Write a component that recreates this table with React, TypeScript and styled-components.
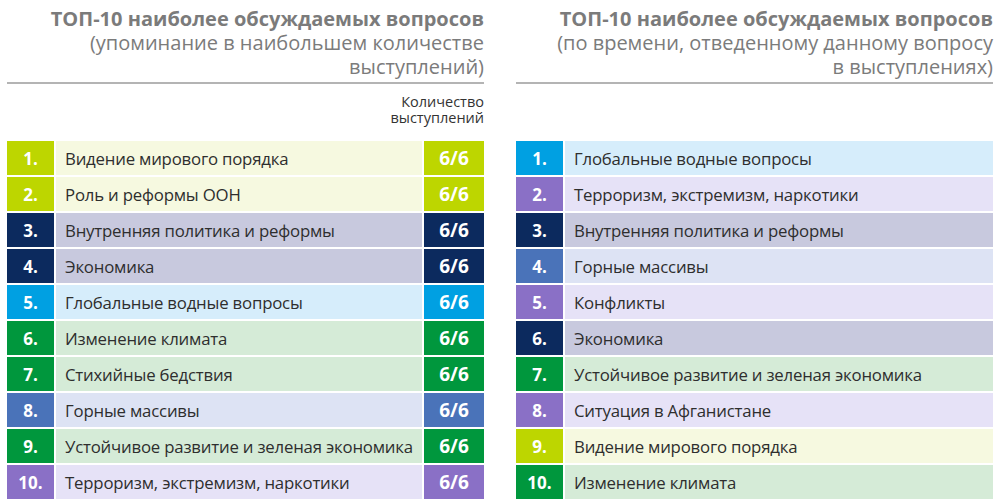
import React from 'react';
import styled, { createGlobalStyle } from 'styled-components';

const GlobalStyle = createGlobalStyle`
  html, body {
    margin: 0;
    padding: 0;
    background: #ffffff;
  }
  body {
    font-family: "Open Sans", "Noto Sans", "DejaVu Sans", sans-serif;
    color: #333333;
  }
`;

type Tone = 'lime' | 'navy' | 'sky' | 'green' | 'steel' | 'violet';

const palette: Record<Tone, { main: string; light: string }> = {
  lime: { main: '#bdd600', light: '#f6f9e0' },
  navy: { main: '#0c2a5e', light: '#c8c9de' },
  sky: { main: '#00a0e2', light: '#d6edfb' },
  green: { main: '#00973d', light: '#d5ebd7' },
  steel: { main: '#4a73b9', light: '#dde3f4' },
  violet: { main: '#8a70c6', light: '#e6e2f7' },
};

const Page = styled.div`
  width: 1000px;
  height: 503px;
  display: grid;
  grid-template-columns: 477px 477px;
  column-gap: 32px;
  padding: 0 7px 0 7px;
  box-sizing: border-box;
  overflow: hidden;
`;

const Panel = styled.section`
  display: flex;
  flex-direction: column;
  min-width: 0;
`;

const Heading = styled.header`
  padding-top: 7px;
  padding-bottom: 3px;
  border-bottom: 2px solid #b4b4b4;
  text-align: right;
  color: #7b7b7b;
  font-size: 20px;
  line-height: 24px;
`;

const Title = styled.div`
  font-weight: 700;
`;

const Subtitle = styled.div`
  font-weight: 400;
`;

const ColumnNote = styled.div`
  height: 57px;
  padding-top: 10px;
  box-sizing: border-box;
  text-align: right;
  font-size: 14.5px;
  line-height: 16px;
  color: #333333;
`;

const Rows = styled.div`
  display: flex;
  flex-direction: column;
  gap: 2px;
`;

const Row = styled.div<{ $withValue: boolean }>`
  display: grid;
  grid-template-columns: ${(p) => (p.$withValue ? '47px minmax(0, 1fr) 60px' : '47px minmax(0, 1fr)')};
  column-gap: 2px;
  height: 34px;
`;

const Rank = styled.div<{ $tone: Tone }>`
  background: ${(p) => palette[p.$tone].main};
  color: #ffffff;
  font-weight: 700;
  font-size: 17px;
  display: flex;
  align-items: center;
  justify-content: center;
`;

const Topic = styled.div<{ $tone: Tone }>`
  background: ${(p) => palette[p.$tone].light};
  padding-left: 9px;
  font-size: 16.8px;
  letter-spacing: -0.2px;
  display: flex;
  align-items: center;
  white-space: nowrap;
  overflow: hidden;
  color: #2e2e2e;
`;

const Score = styled.div<{ $tone: Tone }>`
  background: ${(p) => palette[p.$tone].main};
  color: #ffffff;
  font-weight: 700;
  font-size: 19px;
  display: flex;
  align-items: center;
  justify-content: center;
`;

type Item = { topic: string; tone: Tone; score?: string };

const byMentions: Item[] = [
  { topic: 'Видение мирового порядка', tone: 'lime', score: '6/6' },
  { topic: 'Роль и реформы ООН', tone: 'lime', score: '6/6' },
  { topic: 'Внутренняя политика и реформы', tone: 'navy', score: '6/6' },
  { topic: 'Экономика', tone: 'navy', score: '6/6' },
  { topic: 'Глобальные водные вопросы', tone: 'sky', score: '6/6' },
  { topic: 'Изменение климата', tone: 'green', score: '6/6' },
  { topic: 'Стихийные бедствия', tone: 'green', score: '6/6' },
  { topic: 'Горные массивы', tone: 'steel', score: '6/6' },
  { topic: 'Устойчивое развитие и зеленая экономика', tone: 'green', score: '6/6' },
  { topic: 'Терроризм, экстремизм, наркотики', tone: 'violet', score: '6/6' },
];

const byTime: Item[] = [
  { topic: 'Глобальные водные вопросы', tone: 'sky' },
  { topic: 'Терроризм, экстремизм, наркотики', tone: 'violet' },
  { topic: 'Внутренняя политика и реформы', tone: 'navy' },
  { topic: 'Горные массивы', tone: 'steel' },
  { topic: 'Конфликты', tone: 'violet' },
  { topic: 'Экономика', tone: 'navy' },
  { topic: 'Устойчивое развитие и зеленая экономика', tone: 'green' },
  { topic: 'Ситуация в Афганистане', tone: 'violet' },
  { topic: 'Видение мирового порядка', tone: 'lime' },
  { topic: 'Изменение климата', tone: 'green' },
];

const TopList: React.FC<{ items: Item[] }> = ({ items }) => (
  <Rows>
    {items.map((item, index) => (
      <Row key={index} $withValue={!!item.score}>
        <Rank $tone={item.tone}>{index + 1}.</Rank>
        <Topic $tone={item.tone}>{item.topic}</Topic>
        {item.score && <Score $tone={item.tone}>{item.score}</Score>}
      </Row>
    ))}
  </Rows>
);

const App: React.FC = () => (
  <>
    <GlobalStyle />
    <Page>
      <Panel>
        <Heading>
          <Title>ТОП-10 наиболее обсуждаемых вопросов</Title>
          <Subtitle>(упоминание в наибольшем количестве</Subtitle>
          <Subtitle>выступлений)</Subtitle>
        </Heading>
        <ColumnNote>
          Количество
          <br />
          выступлений
        </ColumnNote>
        <TopList items={byMentions} />
      </Panel>
      <Panel>
        <Heading>
          <Title>ТОП-10 наиболее обсуждаемых вопросов</Title>
          <Subtitle>(по времени, отведенному данному вопросу</Subtitle>
          <Subtitle>в выступлениях)</Subtitle>
        </Heading>
        <ColumnNote />
        <TopList items={byTime} />
      </Panel>
    </Page>
  </>
);

export default App;
